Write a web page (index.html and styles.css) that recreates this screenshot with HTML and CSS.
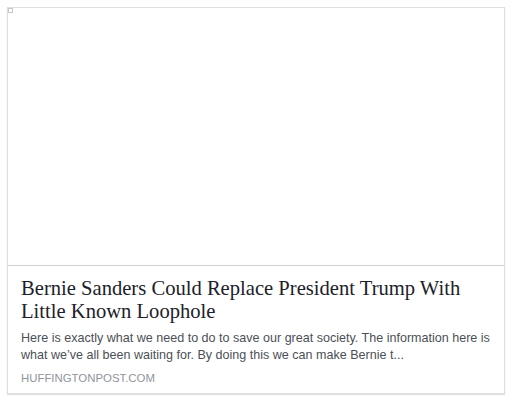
FILE: index.html
```html
<!DOCTYPE html>
<html>
<head>
<meta charset="utf-8">
<link rel="stylesheet" href="styles.css">
</head>
<body>
<div class="card">
  <div class="image"><span class="broken"></span></div>
  <div class="body">
    <div class="title">Bernie Sanders Could Replace President Trump With Little Known Loophole</div>
    <div class="desc">Here is exactly what we need to do to save our great society. The information here is what we’ve all been waiting for. By doing this we can make Bernie t...</div>
    <div class="domain">HUFFINGTONPOST.COM</div>
  </div>
</div>
</body>
</html>
```
FILE: styles.css
```css
html, body { margin: 0; background: #fff; }
body { padding: 7px; }
.card {
  width: 496px;
  border: 1px solid #dddfe2;
  box-shadow: 0 1px 1px rgba(0,0,0,0.12);
  background: #fff;
}
.image {
  height: 257px;
  border-bottom: 1px solid #cfd1d5;
  position: relative;
}
.broken {
  position: absolute; left: 0; top: 0;
  width: 3px; height: 3px;
  border: 1px solid #c8c8c8;
}
.body { padding: 11px 10px 8px 13px; }
.title {
  font-family: "Liberation Serif", Georgia, serif;
  font-size: 20.6px;
  line-height: 23px;
  color: #1d2129;
  max-height: 46px;
  overflow: hidden;
}
.desc {
  margin-top: 7px;
  font-family: "Liberation Sans", Arial, sans-serif;
  font-size: 12.55px;
  line-height: 17px;
  color: #4b4f56;
}
.domain {
  margin-top: 8px;
  font-family: "Liberation Sans", Arial, sans-serif;
  font-size: 11.4px;
  line-height: 13px;
  color: #90949c;
  text-transform: uppercase;
}
```
